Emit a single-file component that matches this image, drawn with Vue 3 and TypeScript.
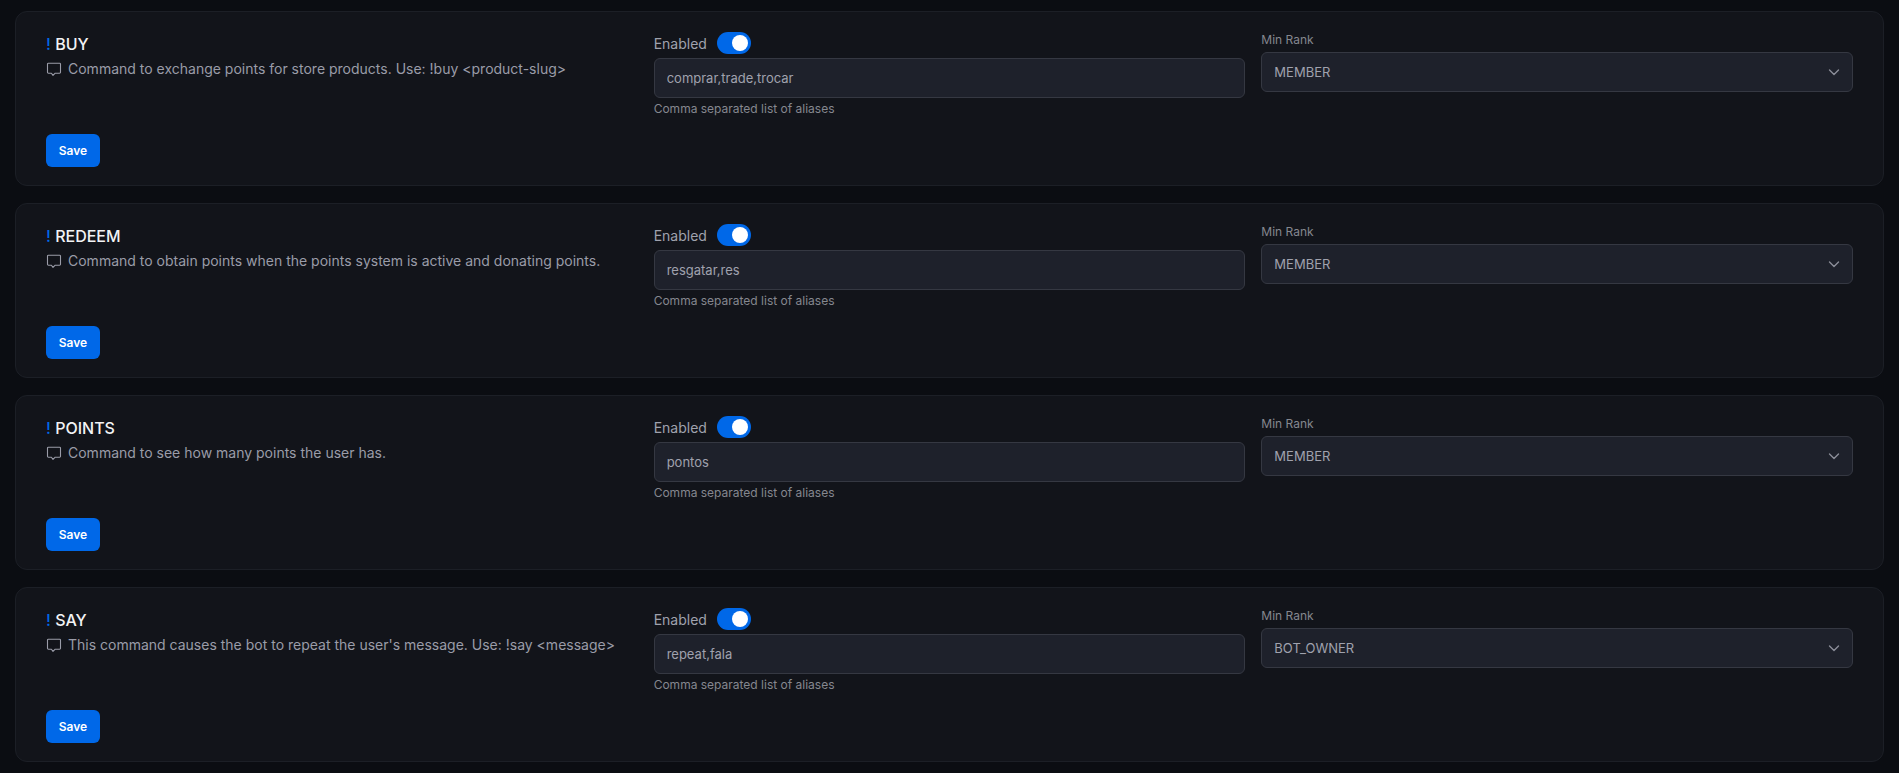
<script setup lang="ts">
interface Cmd { name: string; desc: string; aliases: string; rank: string }
const commands: Cmd[] = [
  { name: 'BUY', desc: 'Command to exchange points for store products. Use: !buy <product-slug>', aliases: 'comprar,trade,trocar', rank: 'MEMBER' },
  { name: 'REDEEM', desc: 'Command to obtain points when the points system is active and donating points.', aliases: 'resgatar,res', rank: 'MEMBER' },
  { name: 'POINTS', desc: 'Command to see how many points the user has.', aliases: 'pontos', rank: 'MEMBER' },
  { name: 'SAY', desc: "This command causes the bot to repeat the user's message. Use: !say <message>", aliases: 'repeat,fala', rank: 'BOT_OWNER' },
]
</script>

<template>
  <main class="page">
    <section v-for="c in commands" :key="c.name" class="card">
      <div class="grid">
        <div class="info">
          <h3 class="title"><span class="bang">!</span> {{ c.name }}</h3>
          <p class="desc">
            <svg class="icon" viewBox="0 0 16 16" fill="none" stroke="currentColor" stroke-width="1.1" stroke-linejoin="round">
              <path d="M2.4 2.2h11.2a.9.9 0 0 1 .9.9v8.2a.9.9 0 0 1-.9.9H9.2L7 14.4l-1.6-2.2H2.4a.9.9 0 0 1-.9-.9V3.1a.9.9 0 0 1 .9-.9z" />
            </svg>
            <span>{{ c.desc }}</span>
          </p>
        </div>
        <div class="field">
          <div class="toggle-row">
            <span class="toggle-label">Enabled</span>
            <span class="toggle"><span class="knob"></span></span>
          </div>
          <input class="control" type="text" :value="c.aliases" />
          <small class="help">Comma separated list of aliases</small>
        </div>
        <div class="field">
          <label class="rank-label">Min Rank</label>
          <div class="select-wrap">
            <select class="control select">
              <option>{{ c.rank }}</option>
            </select>
            <svg class="chevron" viewBox="0 0 16 16" fill="none" stroke="currentColor" stroke-width="1.4" stroke-linecap="round" stroke-linejoin="round">
              <path d="M3.5 6l4.5 4.5L12.5 6" />
            </svg>
          </div>
        </div>
      </div>
      <button class="save" type="button">Save</button>
    </section>
  </main>
</template>

<style>
html, body { margin: 0; background: #0b0d12; }
</style>

<style scoped>
.page {
  box-sizing: border-box;
  height: 773px;
  overflow: hidden;
  padding: 11px 15px 0;
  display: flex;
  flex-direction: column;
  gap: 17px;
  font-family: Inter, "Liberation Sans", sans-serif;
  color: #9a9ca8;
}
.card {
  box-sizing: border-box;
  height: 175px;
  padding: 20px 30px 19px;
  background: #12141a;
  border: 1px solid #1c1f26;
  border-radius: 12px;
}
.grid {
  display: grid;
  grid-template-columns: repeat(3, minmax(0, 1fr));
  gap: 16px;
  height: 85px;
}
.info { padding-top: 2px; }
.title {
  margin: 0;
  font-size: 16px;
  line-height: 20px;
  font-weight: 500;
  color: #f2f3f5;
}
.bang { color: #0068e8; }
.desc {
  margin: 5px 0 0;
  display: flex;
  align-items: center;
  gap: 6px;
  font-size: 14px;
  line-height: 20px;
  color: #9a9ca8;
}
.icon { width: 16px; height: 16px; flex: none; }
.field { display: flex; flex-direction: column; }
.toggle-row {
  display: flex;
  align-items: center;
  gap: 10px;
  height: 22px;
  margin-bottom: 4px;
}
.toggle-label { font-size: 14px; color: #a0a2ae; }
.toggle {
  position: relative;
  width: 34px;
  height: 22px;
  border-radius: 11px;
  background: #0068e8;
}
.knob {
  position: absolute;
  top: 3px;
  right: 3px;
  width: 16px;
  height: 16px;
  border-radius: 50%;
  background: #fff;
}
.control {
  box-sizing: border-box;
  width: 100%;
  height: 40px;
  padding: 0 12px;
  background: #1e212b;
  border: 1px solid #353842;
  border-radius: 6px;
  font: 400 13px Inter, "Liberation Sans", sans-serif;
  color: #a0a2ae;
  outline: none;
}
.help { margin-top: 3px; font-size: 12px; line-height: 16px; color: #85878f; }
.rank-label { font-size: 12px; line-height: 16px; margin-bottom: 4px; color: #85878f; }
.select-wrap { position: relative; }
.select { appearance: none; display: block; }
.chevron {
  position: absolute;
  top: 12px;
  right: 11px;
  width: 16px;
  height: 16px;
  color: #8b8d98;
}
.save {
  display: block;
  margin-top: 17px;
  width: 54px;
  height: 33px;
  padding: 0;
  border: 0;
  border-radius: 6px;
  background: #0068e8;
  color: #fff;
  font: 600 12px Inter, "Liberation Sans", sans-serif;
}
</style>
